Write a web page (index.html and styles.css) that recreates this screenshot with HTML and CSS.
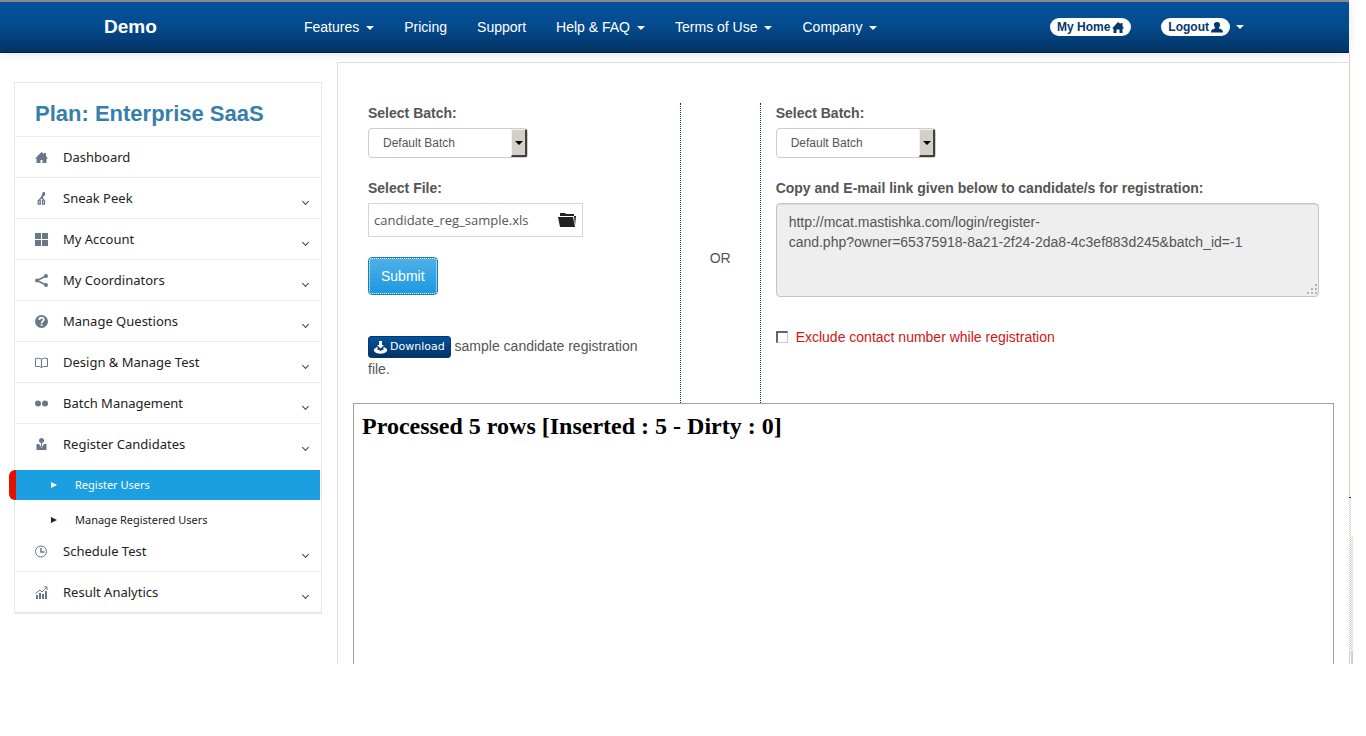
FILE: index.html
```html
<!DOCTYPE html>
<html lang="en">
<head>
<meta charset="utf-8">
<title>Register Users</title>
<link rel="stylesheet" href="styles.css">
</head>
<body>
<div class="window">
<div class="page">
  <header class="topbar">
    <a class="brand" href="#">Demo</a>
    <nav class="menu">
      <a class="caret" href="#">Features</a>
      <a href="#">Pricing</a>
      <a href="#">Support</a>
      <a class="caret" href="#">Help &amp; FAQ</a>
      <a class="caret" href="#">Terms of Use</a>
      <a class="caret" href="#">Company</a>
    </nav>
    <div class="account">
      <a class="pill" href="#">My Home
        <svg width="12" height="11" viewBox="0 0 12 11"><path fill="currentColor" d="M6 0 8.500 2V1h2v3L12 6.500h-1.500V11H7.500V7.500h-3V11h-3V6.500H0z"/></svg></a>
      <a class="caret" href="#"><span class="pill">Logout
        <svg width="12" height="11" viewBox="0 0 12 11"><path fill="currentColor" d="M6 0c2.500 0 3.200 1.500 3 3.300C8.800 5 8 5.500 7.600 6.300 10 7.300 12 7.500 12 10.500H0c0-3 2-3.200 4.400-4.200C4 5.500 3.200 5 3 3.300 2.800 1.500 3.500 0 6 0z"/></svg></span></a>
    </div>
  </header>

  <div class="body">
    <aside class="sidebar">
      <h1>Plan: Enterprise SaaS</h1>
      <ul class="side-menu">
        <li><a href="#"><svg class="ico" viewBox="0 0 13 13"><path d="M6.500 1 9 3V2h2v3l2 2.500h-1.500V12H7.500V9h-2v3h-4V7.500H0z"/></svg>Dashboard</a></li>
        <li><a class="more" href="#"><svg class="ico" viewBox="0 0 13 13"><path d="M8 0h2v3L7.500 5.500v1L6 7V5z"/><path fill="none" stroke="#67788a" stroke-width="1.300" d="M6.700 5.200 3.200 9v3.200h2V8M7 5.500l2.500 3.500v3.200h-2V8"/></svg>Sneak Peek</a></li>
        <li><a class="more" href="#"><svg class="ico" viewBox="0 0 13 13"><path d="M0 0h6v6H0zM7 0h6v6H7zM0 7h6v6H0zM7 7h6v6H7z"/></svg>My Account</a></li>
        <li><a class="more" href="#"><svg class="ico" viewBox="0 0 13 13"><circle cx="2" cy="6.500" r="2"/><circle cx="11" cy="2" r="2"/><circle cx="11" cy="11" r="2"/><path fill="none" stroke="#67788a" stroke-width="1.600" d="M11 2 2 6.500 11 11"/></svg>My Coordinators</a></li>
        <li><a class="more" href="#"><svg class="ico" viewBox="0 0 13 13"><circle cx="6.500" cy="6.500" r="6.500"/><path fill="none" stroke="#fff" stroke-width="1.700" d="M4.300 5c0-3.200 4.500-3 4.500-.5 0 1.600-2.200 1.600-2.200 3.700M6.600 9.300V11"/></svg>Manage Questions</a></li>
        <li><a class="more" href="#"><svg class="ico" viewBox="0 0 13 13"><path fill="none" stroke="#67788a" d="M.5 10.500v-8q3-1 6 .5 3-1.500 6-.5v8h-4l-2 1-2-1zM6.500 3v8"/></svg>Design &amp; Manage Test</a></li>
        <li><a class="more" href="#"><svg class="ico" viewBox="0 0 13 13"><circle cx="3" cy="6.500" r="3"/><circle cx="10" cy="6.500" r="3"/></svg>Batch Management</a></li>
        <li class="open"><a class="more" href="#"><svg class="ico" viewBox="0 0 13 13"><circle cx="6.500" cy="2.500" r="2.500"/><path d="M1.500 6H4l2.500 4L9 6h2.500v6h-10z"/><path d="M6 5h1v4H6z"/></svg>Register Candidates</a>
          <ul class="submenu">
            <li><a class="active" href="#"><svg width="6" height="6" viewBox="0 0 6 6"><path fill="currentColor" d="M0 0 6 3 0 6z"/></svg>Register Users</a></li>
            <li><a href="#"><svg width="6" height="6" viewBox="0 0 6 6"><path fill="currentColor" d="M0 0 6 3 0 6z"/></svg>Manage Registered Users</a></li>
          </ul></li>
        <li><a class="more" href="#"><svg class="ico" viewBox="0 0 13 13"><g fill="none" stroke="#67788a"><circle cx="6" cy="6.500" r="5.500"/><path d="M6 3v4h3.500" stroke-width="1.500"/></g></svg>Schedule Test</a></li>
        <li><a class="more" href="#"><svg class="ico" viewBox="0 0 13 13"><path d="M1 9h2v4H1zM4 7h2v6H4zM7 8h2v5H7zM10 5h2v8h-2z"/><path fill="none" stroke="#67788a" d="M.5 7.500 5 4l2 2L11.500 1.500M9 .8h3V4"/></svg>Result Analytics</a></li>
      </ul>
    </aside>

    <main class="content">
      <div class="columns">
        <form class="col upload">
          <label for="batch-a">Select Batch:</label>
          <div class="select"><select id="batch-a"><option>Default Batch</option></select></div>
          <label for="file">Select File:</label>
          <div class="file"><input id="file" type="text" value="candidate_reg_sample.xls" readonly>
            <button type="button" aria-label="Browse"><svg width="18" height="14" viewBox="0 0 18 14"><path fill="#222" d="M2 0h5l1 1h8v2H2zM0 4h15l2 10H2z"/><path fill="#222" d="M16 3h2l-1 10z"/></svg></button></div>
          <button class="submit" type="button">Submit</button>
          <p class="sample"><button class="download" type="button"><svg width="13" height="13" viewBox="0 0 13 13"><path fill="#fff" d="M5 0h3v4h2L6.500 7.500 3 4h2z"/><path fill="#fff" fill-rule="evenodd" d="M3 6 0 8v2c2 3.500 11 3.500 13 0V8l-3-2-1 1 1 1.200-3.500 1.600L3 8.200 4 7z"/></svg>Download</button> sample candidate registration file.</p>
        </form>
        <div class="or">OR</div>
        <form class="col">
          <label for="batch-b">Select Batch:</label>
          <div class="select"><select id="batch-b"><option>Default Batch</option></select></div>
          <label for="link">Copy and E-mail link given below to candidate/s for registration:</label>
          <div class="link-box">
            <textarea id="link" readonly>http://mcat.mastishka.com/login/register-
cand.php?owner=65375918-8a21-2f24-2da8-4c3ef883d245&amp;batch_id=-1</textarea>
            <svg class="grip" width="12" height="12" viewBox="0 0 12 12"><path fill="#b4b4b4" d="M9 0h2v2H9zM5 4h2v2H5zM9 4h2v2H9zM1 8h2v2H1zM5 8h2v2H5zM9 8h2v2H9z"/></svg>
          </div>
          <label class="exclude"><input type="checkbox">Exclude contact number while registration</label>
        </form>
      </div>
      <section class="result"><h2>Processed 5 rows [Inserted : 5 - Dirty : 0]</h2></section>
    </main>
  </div>
</div>
<div class="edge"><i class="edge-line"></i><i class="edge-thin"></i><i class="edge-track"></i><i class="edge-end"></i></div>
</div>
</body>
</html>
```
FILE: styles.css
```css
*, *::before { box-sizing: border-box; }
body { margin: 0; background: #fff; color: #555; font: 14px/20px "Liberation Sans", Arial, sans-serif; }
a { color: inherit; text-decoration: none; }
ul { list-style: none; margin: 0; padding: 0; }
svg { flex: none; }
button, input, select, textarea { font: inherit; color: inherit; margin: 0; }

.window { display: flex; min-height: calc(100vh - 72px); padding-right: 13px; }
.page { flex: 1; display: flex; flex-direction: column; min-width: 0; }

.topbar {
  display: flex; align-items: center; height: 53px; padding: 0 105px 0 104px;
  border-top: 2px solid #8b8985; border-bottom: 1px solid #001f44;
  background: linear-gradient(#04529c, #044a8c 50%, #033365);
  box-shadow: 0 1px 10px rgba(0, 0, 0, .1); color: #fff;
}
.brand { width: 185px; font-size: 19px; font-weight: bold; }
.menu { display: flex; }
.menu a { padding: 0 15px; }
.caret::after {
  content: ""; display: inline-block; margin-left: 6px; vertical-align: middle;
  border: 4px solid transparent; border-top-color: #fff; border-bottom: 0;
}
.menu .caret::after { margin-left: 7px; }
.account { display: flex; align-items: center; gap: 30px; margin-left: auto; }
.account .caret { display: flex; align-items: center; }
.pill {
  display: flex; align-items: center; gap: 2px; height: 18px; padding: 0 7px; border-radius: 9px;
  background: #fff; color: #03386f; font-size: 12px; font-weight: bold;
}

.body { flex: 1; display: flex; padding: 9px 0 0 14px; gap: 15px; }
.sidebar { width: 308px; flex: none; align-self: flex-start; margin-top: 20px; border: 1px solid #e8e8e8; border-bottom-width: 2px; }
.sidebar h1 { margin: 0; padding: 16px 20px 7px; font-size: 22px; line-height: 30px; color: #367fac; }
.side-menu { font-family: "Noto Sans", "Open Sans", sans-serif; font-size: 13px; color: #222; }
.side-menu > li > a { display: flex; align-items: center; height: 41px; padding: 0 12px 0 20px; border-top: 1px solid #ebebeb; }
.side-menu > .open + li > a { border-top-color: transparent; }
.ico { width: 13px; height: 13px; margin-right: 15px; fill: #67788a; }
.more::after {
  content: ""; width: 4px; height: 4px; margin: 6px 1px 0 auto;
  border: solid #444; border-width: 0 1px 1px 0; transform: rotate(45deg);
}
.submenu { display: grid; gap: 5px; margin: 6px 0 -5px; font-size: 11px; }
.submenu a { display: flex; align-items: center; gap: 18px; height: 30px; margin: 0 1px 0 -6px; padding-left: 42px; }
.submenu .active { background: #1c9fe1; color: #fff; border-left: 7px solid #e41000; border-radius: 6px 0 0 6px; padding-left: 35px; }

.content { flex: 1; min-width: 0; display: flex; flex-direction: column; padding: 40px 15px 0; border: solid #ddd; border-width: 1px 0 0 1px; }
.columns { display: grid; grid-template-columns: 4fr 80px 7fr; min-height: 300px; }
.col { padding: 0 15px; }
.upload { border-right: 1px dotted #03386f; }
.or { display: flex; align-items: center; justify-content: center; padding-top: 10px; border-right: 1px dotted #03386f; }
.col > label { display: block; margin-bottom: 5px; font-weight: bold; }
.select { position: relative; width: 160px; height: 30px; margin-bottom: 20px; }
.select select {
  appearance: none; width: 100%; height: 100%; padding: 0 14px; border: 1px solid #ccc; border-radius: 4px;
  background: #fff; font-size: 12px;
}
.select::before {
  content: ""; position: absolute; top: 1px; right: 1px; bottom: 1px; width: 16px; pointer-events: none;
  background: #d4d0c8; border: solid; border-width: 1px 2px 2px 1px; border-color: #f4f2ee #404040 #404040 #f4f2ee;
}
.select::after {
  content: ""; position: absolute; top: 13px; right: 5px; pointer-events: none;
  border: 4px solid transparent; border-top-color: #000; border-bottom: 0;
}
.file { display: flex; align-items: center; width: 215px; height: 34px; border: 1px solid #d5d5d5; margin-bottom: 20px; }
.file input { flex: 1; min-width: 0; padding: 0 5px; border: 0; background: none; font-family: "Open Sans", "Noto Sans", sans-serif; font-size: 13px; }
.file button { display: flex; padding: 0 6px; border: 0; background: none; }
.submit {
  display: block; height: 38px; padding: 0 12px; border: 1px solid #1480b8; border-radius: 4px;
  background: linear-gradient(#4fb1e8, #1c98e0); color: #fff; outline: 1px dotted #fff; outline-offset: -2px;
}
.sample { margin: 40px 0 0; padding-right: 15px; line-height: 22px; }
.download {
  display: inline-flex; align-items: center; gap: 3px; height: 22px; padding: 0 5px; vertical-align: middle;
  border: 1px solid #003a70; border-radius: 3px; background: linear-gradient(#04529c, #033365);
  color: #fff; font-family: "DejaVu Sans", sans-serif; font-size: 11px;
}
.link-box { position: relative; height: 94px; margin-bottom: 30px; }
.link-box textarea {
  display: block; width: 100%; height: 100%; padding: 8px 12px; resize: none; overflow: hidden;
  border: 1px solid #c4c4c4; border-radius: 4px; background: #eee; box-shadow: inset 0 1px 1px rgba(0, 0, 0, .08);
}
.grip { position: absolute; right: 1px; bottom: 1px; }
.col > .exclude { display: flex; align-items: center; gap: 8px; margin: 0; font-weight: normal; color: #d01515; }
.exclude input { appearance: none; width: 12px; height: 12px; border: solid; border-width: 2px 1px 1px 2px; border-color: #666 #ccc #ccc #666; background: #fff; }
.result { flex: 1; min-height: 261px; border: solid #a0a0a0; border-width: 1px 1px 0; }
.result h2 { margin: 8px; color: #000; font: bold 24px/28px "Liberation Serif", "Times New Roman", serif; }

.edge { width: 4px; display: flex; flex-direction: column; padding-top: 53px; }
.edge-line { flex: 1; width: 1px; background: #d4d0c8; }
.edge-thin { width: 2px; height: 40px; border-top: 1px solid #333; background: repeating-conic-gradient(#d4d0c8 0 25%, #fff 0 50%) 0 0 / 2px 2px; }
.edge-track { height: 115px; background: repeating-conic-gradient(#d4d0c8 0 25%, #fff 0 50%) 0 0 / 2px 2px; }
.edge-end { height: 12px; border: solid #d4d0c8; border-width: 1px 2px 0 1px; }
```
